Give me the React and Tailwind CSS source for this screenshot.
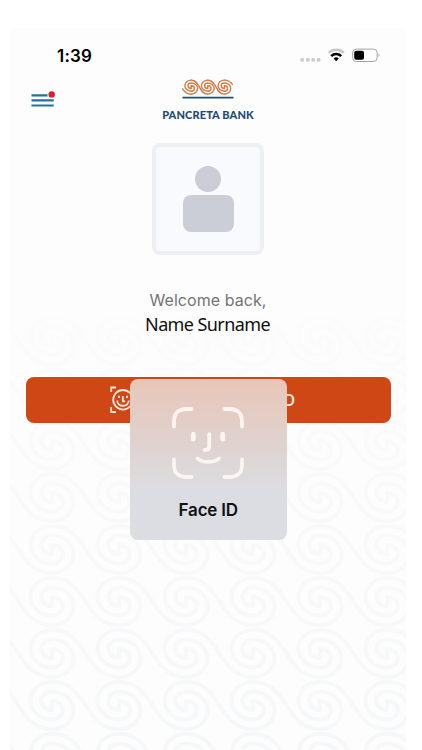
import { clsx } from 'clsx';

// Two interlocked arms that meet in the middle of the spiral
const SPIRAL =
  'M0 23.8 A21.5 18.9 0 0 0 0 -14 A10.8 9.3 0 0 0 0 4.6 L0 -4.6 A10.8 9.3 0 0 1 0 14 A21.5 18.9 0 0 1 0 -23.8';

const ROWS = [341, 393, 445.5, 497.5, 549.5, 601.5, 653.5, 705.5, 757.5];
const COLS = [-15, 52, 119, 186, 253, 320, 387];

function WavePattern() {
  return (
    <svg
      className="absolute inset-0 -z-10"
      width="396"
      height="722"
      viewBox="10 28 396 722"
      fill="none"
      strokeWidth="4"
      strokeLinejoin="round"
    >
      <defs>
        <linearGradient id="waveFade" gradientUnits="userSpaceOnUse" x1="0" y1="310" x2="0" y2="750">
          <stop offset="0%" stopColor="#fcfcfc" />
          <stop offset="45%" stopColor="#f9f9fa" />
          <stop offset="100%" stopColor="#f6f7f8" />
        </linearGradient>
        <mask id="waveMask" maskUnits="userSpaceOnUse" x="0" y="28" width="422" height="722">
          <g stroke="#fff">
            {ROWS.map((y) =>
              COLS.map((x) => (
                <g key={`${x}-${y}`} transform={`translate(${x} ${y})`}>
                  <path d={SPIRAL} />
                  <path d="M0 -23.8 C36 -23.8 31 23.8 67 23.8" />
                </g>
              ))
            )}
          </g>
        </mask>
      </defs>
      <rect x="10" y="300" width="396" height="450" fill="url(#waveFade)" mask="url(#waveMask)" />
    </svg>
  );
}

function Logo() {
  return (
    <div className="flex flex-col items-center">
      <svg width="54" height="22" viewBox="0 0 54 22" fill="none">
        <g stroke="#d07a45" strokeWidth="4.6" strokeLinecap="round">
          {[10.2, 26.8, 43.4].map((x, i) => (
            <g key={x} transform={`translate(${x} 9.1) scale(0.295)`}>
              <path d={SPIRAL} />
              {i === 0 && <path d="M0 23.8 C-14 24 -22 17 -29 6" />}
              <path d={i < 2 ? 'M0 -23.8 C30 -24 26 24 56 23.8' : 'M0 -23.8 C12 -24 20 -19 27 -9'} />
            </g>
          ))}
        </g>
        <path d="M1.5 19.6H52.5" stroke="#1f4f7c" strokeWidth="1.8" />
      </svg>
      <span className="mt-[7px] whitespace-nowrap font-['Lato'] text-[11px] leading-[15px] font-black tracking-[0.12px] text-[#1f4a73]">
        PANCRETA BANK
      </span>
    </div>
  );
}

function StatusIcons() {
  return (
    <svg width="82" height="16" viewBox="299 47 82 16">
      {[302.2, 307.8, 313.2, 318.6].map((x) => (
        <rect key={x} x={x - 1.7} y="58" width="3.4" height="3.6" rx="1.2" fill="#cacaca" />
      ))}
      <g fill="none" strokeWidth="2.5">
        <path d="M328.7 52.8 A10.6 10.6 0 0 1 343.7 52.8" stroke="#c6c6c6" />
        <path d="M331.2 56.2 A7 7 0 0 1 341.2 56.2" stroke="#000" />
      </g>
      <path d="M333.6 58.6 A3.7 3.7 0 0 1 338.8 58.6 L336.2 61.3 Z" fill="#000" />
      <rect x="352.6" y="49.1" width="24.6" height="12.4" rx="3.8" fill="#fff" stroke="#a3a3a3" />
      <rect x="354.2" y="50.8" width="9.8" height="9" rx="2" fill="#000" />
      <path d="M378.7 53.5 Q380.2 55.3 378.7 57.1 Z" fill="#777" />
    </svg>
  );
}

function Avatar() {
  return (
    <div className="flex h-[112px] w-[112px] flex-col items-center gap-[3px] rounded-lg border-4 border-[#eeeff1] bg-[#f9fafd] pt-[19px]">
      <div className="h-[26px] w-[26px] shrink-0 rounded-full bg-[#cbcdd7]" />
      <div className="h-[37px] w-[51px] rounded-lg bg-[#cbcdd7]" />
    </div>
  );
}

function FaceBadge() {
  return (
    <svg width="28" height="28" viewBox="0 0 28 28" fill="none" stroke="#ffe9dc" strokeWidth="1.8">
      <path d="M1.2 6V1.5H6M20 1.5H25V6M1.2 21V26H6M20 26H25V21" />
      <circle cx="13" cy="13.8" r="9.8" />
      <path d="M12.8 10V15.4H15.2" />
      <path d="M7.2 14.5C7.4 21.5 18.4 21.5 18.8 14.5" />
      <path d="M9 9.8V12M17 9.8V12" />
    </svg>
  );
}

function FaceIdCard({ className }) {
  return (
    <div
      className={clsx(
        'flex h-[161px] w-[157.5px] flex-col items-center rounded-lg bg-linear-to-b from-[#e9c6b7] via-[#dfd2cf] via-40% to-[#dcdde2] to-70%',
        className
      )}
    >
      <svg
        className="mt-[27px]"
        width="74"
        height="74"
        viewBox="-1 -1 74 74"
        fill="none"
        stroke="#fbf5f2"
        strokeWidth="3.8"
        strokeLinecap="round"
      >
        <path d="M2 19.5V15C2 6 6 2 15 2H19.5M52.5 2H57C66 2 70 6 70 15V19.5M2 52.5V57C2 66 6 70 15 70H19.5M52.5 70H57C66 70 70 66 70 57V52.5" />
        <path d="M21.3 27.2V32.2M50.7 27.2V32.2" strokeWidth="4.8" />
        <path d="M37.2 27.2V39.2Q37.2 43 33.4 43H32.6" />
        <path d="M25.6 51.6C31 56 41.6 56 47 51.6" />
      </svg>
      <span className="mt-[18px] text-[17px] leading-6 font-semibold tracking-[-0.2px] text-[#111214]">Face ID</span>
    </div>
  );
}

export default function App() {
  return (
    <div className="h-[750px] w-[422px] overflow-hidden bg-white pt-[28px] pl-[10px] font-['Inter',sans-serif]">
      <main className="relative isolate flex h-[722px] w-[396px] flex-col bg-[#fdfdfd]">
        <WavePattern />

        {/* Status bar */}
        <div className="flex h-[50px] items-start justify-between pt-[19px] pr-[25px] pl-[47px]">
          <span className="-mt-[3px] text-[17px] leading-6 font-semibold tracking-[0.2px] text-black">1:39</span>
          <StatusIcons />
        </div>

        {/* Header */}
        <header className="grid h-[65px] grid-cols-[1fr_100px_1fr] items-start">
          <button className="mt-[12px] ml-[21px] w-[25px]" aria-label="Menu">
            <svg width="25" height="18" viewBox="0 0 25 18">
              <path d="M0.5 5.4H16.5M0.5 10.4H22.7M0.5 15.5H22.7" stroke="#2470a6" strokeWidth="2.1" />
              <circle cx="20.7" cy="4.4" r="3.2" fill="#d91f2b" />
            </svg>
          </button>
          <Logo />
        </header>

        <section className="flex flex-col items-center">
          <Avatar />
          <p className="mt-[33px] text-[16px] leading-6 tracking-[0.05px] text-[#737478]">Welcome back,</p>
          <p className="pr-px font-['Noto_Sans'] text-[18px] leading-6 tracking-[-0.6px] whitespace-nowrap text-[#111]">
            Name Surname
          </p>
        </section>

        {/* Login */}
        <div className="relative mx-4 mt-[41px]">
          <button className="flex h-[46px] w-[365px] items-center justify-between rounded-lg bg-[#cf4715] pr-[96px] pl-[84px]">
            <FaceBadge />
            <span className="text-[16px] font-semibold whitespace-nowrap text-[#ffeee4]">LOGIN FACE ID</span>
          </button>
          <FaceIdCard className="absolute top-[1.5px] left-[103.5px]" />
        </div>
      </main>
    </div>
  );
}
